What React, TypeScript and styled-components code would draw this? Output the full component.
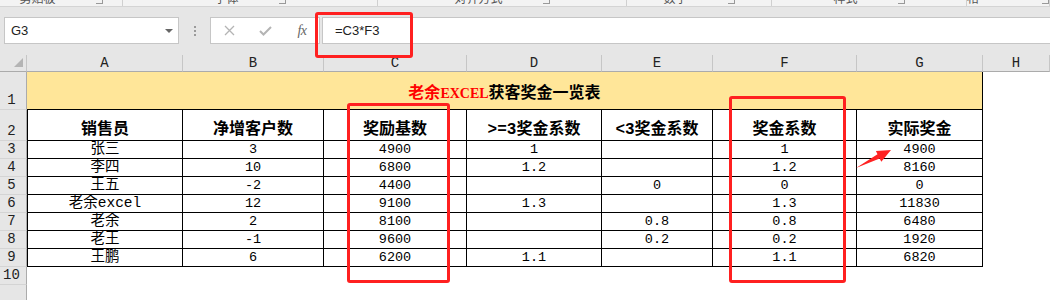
import styled, { createGlobalStyle } from 'styled-components';

type Row = {
  name: string;
  added: string;
  base: string;
  high: string;
  low: string;
  rate: string;
  bonus: string;
}

const rows: Row[] = [
  { name: '张三', added: '3', base: '4900', high: '1', low: '', rate: '1', bonus: '4900' },
  { name: '李四', added: '10', base: '6800', high: '1.2', low: '', rate: '1.2', bonus: '8160' },
  { name: '王五', added: '-2', base: '4400', high: '', low: '0', rate: '0', bonus: '0' },
  { name: '老余excel', added: '12', base: '9100', high: '1.3', low: '', rate: '1.3', bonus: '11830' },
  { name: '老余', added: '2', base: '8100', high: '', low: '0.8', rate: '0.8', bonus: '6480' },
  { name: '老王', added: '-1', base: '9600', high: '', low: '0.2', rate: '0.2', bonus: '1920' },
  { name: '王鹏', added: '6', base: '6200', high: '1.1', low: '', rate: '1.1', bonus: '6820' },
];

const columns = ['A', 'B', 'C', 'D', 'E', 'F', 'G', 'H'];
const headers = ['销售员', '净增客户数', '奖励基数', '>=3奖金系数', '<3奖金系数', '奖金系数', '实际奖金'];

const ribbonGroups = [
  { label: '剪贴板', width: 123 },
  { label: '字体', width: 255 },
  { label: '对齐方式', width: 249 },
  { label: '数字', width: 145 },
  { label: '样式', width: 195 },
  { label: '单元格', width: 83 },
];

const App = () => {
  return (
    <Page>
      <GlobalStyle />
      <RibbonTail>
        {ribbonGroups.map((g) => (
          <RibbonGroup key={g.label} $width={g.width}>
            <GroupLabel>{g.label}</GroupLabel>
            <Launcher />
          </RibbonGroup>
        ))}
      </RibbonTail>

      <FormulaBar>
        <NameBox>
          <span>G3</span>
          <Caret />
        </NameBox>
        <Grip>
          <Dot />
          <Dot />
          <Dot />
        </Grip>
        <Buttons>
          <IconSlot>
            <svg width="11" height="11" viewBox="0 0 11 11">
              <path d="M1 1 L10 10 M10 1 L1 10" stroke="#b4b4b4" strokeWidth="1.3" fill="none" />
            </svg>
          </IconSlot>
          <IconSlot>
            <svg width="13" height="10" viewBox="0 0 13 10">
              <path d="M1 5 L4.5 8.5 L12 1" stroke="#b4b4b4" strokeWidth="2" fill="none" />
            </svg>
          </IconSlot>
          <IconSlot>
            <Fx>fx</Fx>
          </IconSlot>
        </Buttons>
        <FormulaInput>=C3*F3</FormulaInput>
      </FormulaBar>

      <Sheet>
        <Corner>
          <Triangle />
        </Corner>
        {columns.map((c) => (
          <ColHead key={c}>{c}</ColHead>
        ))}

        <RowHead>1</RowHead>
        <TitleCell>
          <Brand>老余<Latin>EXCEL</Latin></Brand>获客奖金一览表
        </TitleCell>
        <Blank />

        <RowHead>2</RowHead>
        {headers.map((h, i) => (
          <HeadCell key={h} $first={i === 0}>{h}</HeadCell>
        ))}
        <Blank />

        {rows.map((r, i) => (
          <>
            <RowHead key={`h${i}`}>{i + 3}</RowHead>
            <Cell $first $cjk>{r.name}</Cell>
            <Cell>{r.added}</Cell>
            <Cell>{r.base}</Cell>
            <Cell>{r.high}</Cell>
            <Cell>{r.low}</Cell>
            <Cell>{r.rate}</Cell>
            <Cell>{r.bonus}</Cell>
            <Blank />
          </>
        ))}

        <RowHead>10</RowHead>
        <EmptyRow />
        <RowHead />
        <EmptyRow />
      </Sheet>

      <Highlight $x={315} $y={12} $w={98} $h={46} />
      <Highlight $x={347} $y={103} $w={103} $h={180} />
      <Highlight $x={729} $y={96} $w={117} $h={187} />
      <Arrow width="45" height="28" viewBox="0 0 45 28">
        <polygon points="6,23 27.5,9.2 25.9,6.1 41,5 31.3,16.7 29.7,13.6" fill="#ff2222" />
      </Arrow>
    </Page>
  )
}

export default App;

const GlobalStyle = createGlobalStyle`
  body {
    margin: 0;
    overflow: hidden;
    background: #fff;
  }
`;

const Page = styled.div`
  position: relative;
  width: 1050px;
  height: 300px;
  overflow: hidden;
  background: #fff;
  font-family: "Liberation Mono", "Noto Sans CJK SC", monospace;
  color: #000;
`;

const RibbonTail = styled.div`
  height: 7px;
  box-sizing: border-box;
  display: flex;
  align-items: flex-end;
  background: #f3f3f3;
  border-bottom: 1px solid #d4d4d4;
  overflow: hidden;
`;

const RibbonGroup = styled.div<{ $width: number }>`
  width: ${(p) => p.$width}px;
  flex-shrink: 0;
  height: 14px;
  box-sizing: border-box;
  display: flex;
  align-items: flex-end;
  justify-content: center;
  gap: 40px;
  border-right: 1px solid #d0d0d0;
`;

const GroupLabel = styled.span`
  font-family: "Noto Sans CJK SC", sans-serif;
  font-size: 12px;
  line-height: 12px;
  color: #555;
  margin-bottom: 2px;
`;

const Launcher = styled.span`
  width: 6px;
  height: 6px;
  margin-bottom: 2px;
  border-right: 1px solid #999;
  border-bottom: 1px solid #999;
`;

const FormulaBar = styled.div`
  height: 48px;
  box-sizing: border-box;
  display: flex;
  align-items: flex-start;
  padding: 10px 0 0 4px;
  background: #e6e6e6;
`;

const NameBox = styled.div`
  width: 175px;
  height: 27px;
  box-sizing: border-box;
  display: flex;
  align-items: center;
  justify-content: space-between;
  padding: 0 5px 0 6px;
  background: #fff;
  border: 1px solid #c6c6c6;
  font-family: "Liberation Sans", sans-serif;
  font-size: 13px;
  color: #222;
`;

const Caret = styled.span`
  width: 0;
  height: 0;
  border-left: 4px solid transparent;
  border-right: 4px solid transparent;
  border-top: 4px solid #666;
`;

const Grip = styled.div`
  width: 31px;
  height: 27px;
  display: flex;
  flex-direction: column;
  align-items: center;
  justify-content: center;
  gap: 2px;
`;

const Dot = styled.span`
  width: 2px;
  height: 2px;
  background: #9a9a9a;
`;

const Buttons = styled.div`
  width: 110px;
  height: 27px;
  box-sizing: border-box;
  display: flex;
  align-items: center;
  background: #fff;
  border: 1px solid #c6c6c6;
`;

const IconSlot = styled.div`
  width: 36px;
  display: flex;
  align-items: center;
  justify-content: center;
`;

const Fx = styled.span`
  font-family: "Liberation Serif", serif;
  font-style: italic;
  font-size: 14px;
  color: #666;
  letter-spacing: -0.5px;
  margin-left: 2px;
`;

const FormulaInput = styled.div`
  flex: 1;
  height: 27px;
  box-sizing: border-box;
  margin-left: 2px;
  padding-left: 12px;
  background: #fff;
  border: 1px solid #c6c6c6;
  border-right: none;
  font-family: "Liberation Sans", sans-serif;
  font-size: 13px;
  line-height: 25px;
  color: #222;
`;

const Sheet = styled.div`
  display: grid;
  grid-template-columns: 27px 156px 141px 143px 135px 111px 144px 126px 67px;
  grid-template-rows: 17px 38px 31px repeat(9, 18px);
`;

const Corner = styled.div`
  display: flex;
  align-items: flex-end;
  justify-content: flex-end;
  padding: 0 3px 4px 0;
  background: #e6e6e6;
  border-right: 1px solid #c6c6c6;
  border-bottom: 1px solid #ababab;
`;

const Triangle = styled.span`
  width: 0;
  height: 0;
  border-left: 9px solid transparent;
  border-bottom: 9px solid #b4b4b4;
`;

const ColHead = styled.div`
  display: flex;
  align-items: flex-end;
  justify-content: center;
  box-sizing: border-box;
  background: #e6e6e6;
  border-right: 1px solid #c6c6c6;
  border-bottom: 1px solid #ababab;
  font-size: 14px;
  line-height: 16px;
  color: #222;
`;

const RowHead = styled.div`
  display: flex;
  align-items: flex-end;
  justify-content: center;
  padding-right: 3px;
  box-sizing: border-box;
  background: #e6e6e6;
  border-right: 1px solid #ababab;
  border-bottom: 1px solid #d4d4d4;
  font-size: 14px;
  line-height: 17px;
  color: #222;
`;

const TitleCell = styled.div`
  grid-column: span 7;
  display: flex;
  align-items: center;
  justify-content: center;
  background: #ffe699;
  border-right: 1px solid #000;
  border-bottom: 1px solid #000;
  font-family: "Liberation Serif", "Noto Sans CJK SC", serif;
  font-size: 16px;
  font-weight: 700;
  padding-top: 1px;
`;

const Brand = styled.span`
  color: #ff0000;
`;

const Latin = styled.span`
  font-size: 14px;
`;

const HeadCell = styled.div<{ $first?: boolean }>`
  display: flex;
  align-items: center;
  justify-content: center;
  padding-top: 3px;
  border-left: ${(p) => (p.$first ? '1px solid #000' : 'none')};
  border-right: 1px solid #000;
  border-bottom: 1px solid #000;
  font-size: 16px;
  font-weight: 700;
  white-space: nowrap;
`;

const Cell = styled.div<{ $first?: boolean; $cjk?: boolean }>`
  display: flex;
  align-items: center;
  justify-content: center;
  border-left: ${(p) => (p.$first ? '1px solid #000' : 'none')};
  border-right: 1px solid #000;
  border-bottom: 1px solid #000;
  font-size: ${(p) => (p.$cjk ? '14.5px' : '13.5px')};
  line-height: 17px;
  white-space: nowrap;
`;

const Blank = styled.div`
  background: #fff;
`;

const EmptyRow = styled.div`
  grid-column: span 8;
  background: #fff;
`;

const Highlight = styled.div<{ $x: number; $y: number; $w: number; $h: number }>`
  position: absolute;
  left: ${(p) => p.$x}px;
  top: ${(p) => p.$y}px;
  width: ${(p) => p.$w}px;
  height: ${(p) => p.$h}px;
  box-sizing: border-box;
  border: 3px solid #ff2020;
  border-radius: 3px;
  pointer-events: none;
`;

const Arrow = styled.svg`
  position: absolute;
  left: 850px;
  top: 145px;
  pointer-events: none;
`;
